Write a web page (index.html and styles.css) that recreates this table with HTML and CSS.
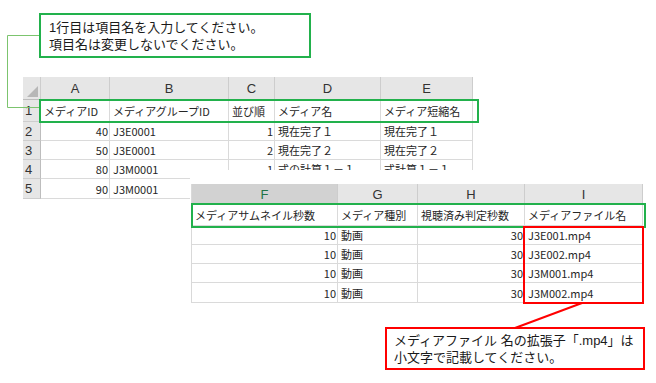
FILE: index.html
```html
<!DOCTYPE html>
<html lang="ja">
<head>
<meta charset="utf-8">
<link rel="stylesheet" href="styles.css">
</head>
<body>
<div class="page">
  <div class="grid1">
    <div class="corner"><span class="tri"></span></div>
    <div class="hd">A</div>
    <div class="hd">B</div>
    <div class="hd">C</div>
    <div class="hd">D</div>
    <div class="hd">E</div>

    <div class="rh">1</div>
    <div class="c">メディアID</div>
    <div class="c">メディアグループID</div>
    <div class="c">並び順</div>
    <div class="c">メディア名</div>
    <div class="c">メディア短縮名</div>

    <div class="rh">2</div>
    <div class="c num">40</div>
    <div class="c">J3E0001</div>
    <div class="c num">1</div>
    <div class="c">現在完了１</div>
    <div class="c">現在完了１</div>

    <div class="rh">3</div>
    <div class="c num">50</div>
    <div class="c">J3E0001</div>
    <div class="c num">2</div>
    <div class="c">現在完了２</div>
    <div class="c">現在完了２</div>

    <div class="rh">4</div>
    <div class="c num">80</div>
    <div class="c">J3M0001</div>
    <div class="c num">1</div>
    <div class="c">式の計算１－１</div>
    <div class="c">式計算１－１</div>

    <div class="rh">5</div>
    <div class="c num">90</div>
    <div class="c">J3M0001</div>
    <div class="c"></div>
    <div class="c"></div>
    <div class="c"></div>
  </div>

  <div class="overlay">
    <div class="grid2">
      <div class="hd sel">F</div>
      <div class="hd">G</div>
      <div class="hd">H</div>
      <div class="hd">I</div>

      <div class="c">メディアサムネイル秒数</div>
      <div class="c">メディア種別</div>
      <div class="c">視聴済み判定秒数</div>
      <div class="c">メディアファイル名</div>

      <div class="c num">10</div>
      <div class="c">動画</div>
      <div class="c num">30</div>
      <div class="c">J3E001.mp4</div>

      <div class="c num">10</div>
      <div class="c">動画</div>
      <div class="c num">30</div>
      <div class="c">J3E002.mp4</div>

      <div class="c num">10</div>
      <div class="c">動画</div>
      <div class="c num">30</div>
      <div class="c">J3M001.mp4</div>

      <div class="c num">10</div>
      <div class="c">動画</div>
      <div class="c num">30</div>
      <div class="c">J3M002.mp4</div>
    </div>
  </div>

  <svg class="lines" width="656" height="383" viewBox="0 0 656 383">
    <polyline points="39,35.5 7.5,35.5 7.5,107.5 41,107.5" fill="none" stroke="#7cc46e" stroke-width="1"/>
    <line x1="582" y1="303" x2="515" y2="328" stroke="#ff0000" stroke-width="2"/>
  </svg>

  <div class="frame frame-g1"></div>
  <div class="frame frame-g2"></div>
  <div class="frame frame-r"></div>

  <div class="note note-green"><span class="ln">1行目は項目名を入力してください。</span><span class="ln">項目名は変更しないでください。</span></div>
  <div class="note note-red"><span class="ln">メディアファイル 名の拡張子「.mp4」は</span><span class="ln">小文字で記載してください。</span></div>
</div>
</body>
</html>
```

FILE: styles.css
```css
* { box-sizing: border-box; }
html, body { margin: 0; padding: 0; background: #fff; }
body {
  width: 656px;
  height: 383px;
  overflow: hidden;
  font-family: "Noto Sans CJK JP", "Noto Sans", sans-serif;
  color: #222;
}
.page {
  position: relative;
  width: 656px;
  height: 383px;
  padding: 77px 0 0 23px;
}

.grid1 {
  display: grid;
  grid-template-columns: 18px 69px 119px 46px 106px 92px;
  grid-template-rows: 23px 22px 19px 19px 19px 20px;
  width: max-content;
}
.grid2 {
  display: grid;
  grid-template-columns: 146px 80px 107px 118px;
  grid-template-rows: 20px 22px 19px 19px 19px 20px;
  width: max-content;
  border-left: 1px solid #d9d9d9;
}

.hd {
  background: #e6e6e6;
  border-right: 1px solid #cdcdcd;
  border-bottom: 1px solid #bdbdbd;
  font-family: "Liberation Sans", Arial, sans-serif;
  font-size: 13px;
  color: #333;
  display: flex;
  align-items: center;
  justify-content: center;
  padding-top: 1px;
}
.hd.sel {
  background: #d2d2d2;
  color: #217346;
}
.corner {
  background: #e6e6e6;
  border-right: 1px solid #cdcdcd;
  border-bottom: 1px solid #bdbdbd;
  position: relative;
}
.tri {
  position: absolute;
  right: 2px;
  bottom: 2px;
  width: 0;
  height: 0;
  border-left: 11px solid transparent;
  border-bottom: 11px solid #b7b7b7;
}
.rh {
  background: #e6e6e6;
  border-right: 1px solid #bdbdbd;
  border-bottom: 1px solid #cdcdcd;
  font-family: "Liberation Sans", Arial, sans-serif;
  font-size: 13px;
  color: #333;
  display: flex;
  align-items: center;
  padding-left: 2px;
}
.c {
  border-right: 1px solid #dadada;
  border-bottom: 1px solid #dadada;
  font-size: 11px;
  line-height: 1;
  color: #262626;
  display: flex;
  align-items: center;
  padding: 1px 2px 0 3px;
  white-space: nowrap;
  overflow: hidden;
}
.c.num { justify-content: flex-end; padding-right: 1px; }

.overlay {
  position: absolute;
  left: 190px;
  top: 170px;
  width: 462px;
  height: 136px;
  background: #fff;
  padding: 14px 0 0 1px;
}

.lines {
  position: absolute;
  left: 0;
  top: 0;
  pointer-events: none;
}

.frame {
  position: absolute;
  border: 2px solid #22b14c;
  pointer-events: none;
}
.frame-g1 { left: 39px; top: 99px; width: 440px; height: 24px; }
.frame-g2 { left: 191px; top: 203px; width: 455px; height: 25px; }
.frame-r { left: 523px; top: 226px; width: 121px; height: 78px; border-color: #ff0000; }

.note {
  position: absolute;
  background: #fff;
  font-family: "Liberation Sans", "Noto Sans CJK JP", sans-serif;
  font-size: 13px;
  color: #1a1a1a;
  white-space: nowrap;
  display: flex;
  flex-direction: column;
}
.ln {
  display: block;
  height: 17px;
  line-height: 17px;
}
.note-green {
  left: 39px;
  top: 13px;
  width: 272px;
  height: 45px;
  border: 2px solid #22b14c;
  padding: 4px 0 0 8px;
}
.note-red {
  left: 385px;
  top: 327px;
  width: 260px;
  height: 43px;
  border: 2px solid #ff0000;
  padding: 3px 0 0 7px;
}
```
